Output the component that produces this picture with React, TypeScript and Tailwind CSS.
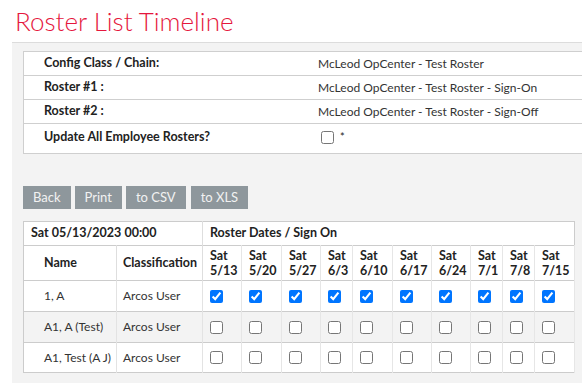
const dates = ['5/13', '5/20', '5/27', '6/3', '6/10', '6/17', '6/24', '7/1', '7/8', '7/15'];
const dateWidths = [39, 40, 39, 32, 40, 39, 39, 32, 32, 40];

const rows = [
  { name: '1, A', cls: 'Arcos User', checked: true },
  { name: 'A1, A (Test)', cls: 'Arcos User', checked: false },
  { name: 'A1, Test (A J)', cls: 'Arcos User', checked: false },
];

const info = [
  { label: 'Config Class / Chain:', value: 'McLeod OpCenter - Test Roster' },
  { label: 'Roster #1 :', value: 'McLeod OpCenter - Test Roster - Sign-On' },
  { label: 'Roster #2 :', value: 'McLeod OpCenter - Test Roster - Sign-Off' },
];

function Check({ checked }: { checked: boolean }) {
  return (
    <input
      type="checkbox"
      readOnly
      checked={checked}
      className="ml-[4px] mr-[3px] my-[3px] block h-[13px] w-[13px]"
    />
  );
}

export default function App() {
  const btn = 'h-[23px] bg-[#8e979c] px-[10px] text-[13px] leading-[23px] text-[#f2f2f2]';

  return (
    <div className="h-[385px] w-[582px] overflow-hidden bg-white font-['Lato','Liberation_Sans',sans-serif] text-[12px] text-[#222]">
      <h1 className="h-[42px] pl-[15px] pt-[6px] text-[26px] font-light leading-[30px] text-[#e5173d]">
        Roster List Timeline
      </h1>

      <div className="ml-[12px] w-[620px] border-t border-[#dcdcdc] bg-[#f3f3f3] pb-[10px] pl-[11px] pt-[8px]">
        <div className="border-y border-l border-[#cfcfcf] bg-white">
          {info.map((r) => (
            <div key={r.label} className="flex h-[24px] items-center border-b border-[#cfcfcf]">
              <div className="w-[274px] pl-[20px] text-[12.5px] font-bold">{r.label}</div>
              <div className="pl-[20px] text-[#333]">{r.value}</div>
            </div>
          ))}
          <div className="flex h-[29px] items-start pt-[4px]">
            <div className="w-[274px] pl-[20px] text-[12.5px] font-bold">Update All Employee Rosters?</div>
            <div className="flex items-center pl-[20px] pt-[1px]">
              <input type="checkbox" readOnly checked={false} className="ml-[3px] block h-[13px] w-[13px]" />
              <span className="ml-[6px] text-[11px]">*</span>
            </div>
          </div>
        </div>

        <div className="mt-[32px] flex gap-[4px]">
          <button className={btn}>Back</button>
          <button className={btn}>Print</button>
          <button className={btn}>to CSV</button>
          <button className={`${btn} ml-[1px]`}>to XLS</button>
        </div>

        <table className="mt-[12px] w-[551px] table-fixed border-collapse border border-[#cccccc] bg-white">
          <colgroup>
            <col className="w-[93px]" />
            <col className="w-[86px]" />
            {dateWidths.map((w, i) => (
              <col key={i} style={{ width: w }} />
            ))}
          </colgroup>
          <thead className="text-[12.5px]">
            <tr className="h-[24px] border-b border-[#cccccc]">
              <th colSpan={2} className="border-r border-[#dedede] px-[7px] text-left font-bold whitespace-nowrap">
                Sat 05/13/2023 00:00
              </th>
              <th colSpan={10} className="px-[7px] text-left font-bold">
                Roster Dates / Sign On
              </th>
            </tr>
            <tr className="h-[35px] border-b border-[#cccccc]">
              <th className="border-r border-[#dedede] pl-[20px] text-left font-bold">Name</th>
              <th className="border-r border-[#dedede] pl-[6px] text-left font-bold">Classification</th>
              {dates.map((d) => (
                <th key={d} className="border-r border-[#e6e6e6] px-[7px] text-left font-bold leading-[15px]">
                  Sat
                  <br />
                  {d}
                </th>
              ))}
            </tr>
          </thead>
          <tbody>
            {rows.map((r, i) => (
              <tr
                key={r.name}
                className={`${i === 1 ? 'bg-[#f3f3f3]' : 'bg-white'} ${i === 2 ? 'h-[30px]' : 'h-[31px] border-b border-[#cccccc]'}`}
              >
                <td className="border-r border-[#e3e3e3] pl-[20px] whitespace-nowrap text-[#333]">{r.name}</td>
                <td className="border-r border-[#e3e3e3] pl-[6px] whitespace-nowrap text-[#333]">{r.cls}</td>
                {dates.map((d) => (
                  <td key={d} className="border-r border-[#e6e6e6] px-[3px]">
                    <Check checked={r.checked} />
                  </td>
                ))}
              </tr>
            ))}
          </tbody>
        </table>
      </div>
    </div>
  );
}
